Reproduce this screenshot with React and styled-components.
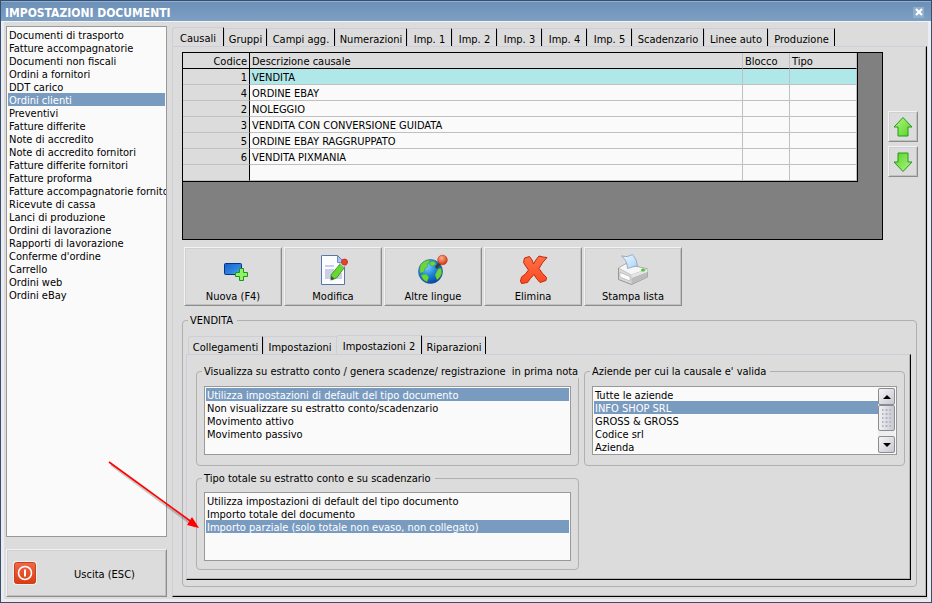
import React, { useRef, useState } from 'react';
import styled, { createGlobalStyle } from 'styled-components';

const documents = [
  'Documenti di trasporto',
  'Fatture accompagnatorie',
  'Documenti non fiscali',
  'Ordini a fornitori',
  'DDT carico',
  'Ordini clienti',
  'Preventivi',
  'Fatture differite',
  'Note di accredito',
  'Note di accredito fornitori',
  'Fatture differite fornitori',
  'Fatture proforma',
  'Fatture accompagnatorie fornitori',
  'Ricevute di cassa',
  'Lanci di produzione',
  'Ordini di lavorazione',
  'Rapporti di lavorazione',
  "Conferme d'ordine",
  'Carrello',
  'Ordini web',
  'Ordini eBay',
];

const mainTabs = [
  { label: 'Causali', width: 52 },
  { label: 'Gruppi', width: 43 },
  { label: 'Campi agg.', width: 68 },
  { label: 'Numerazioni', width: 72 },
  { label: 'Imp. 1', width: 45 },
  { label: 'Imp. 2', width: 45 },
  { label: 'Imp. 3', width: 45 },
  { label: 'Imp. 4', width: 45 },
  { label: 'Imp. 5', width: 45 },
  { label: 'Scadenzario', width: 72 },
  { label: 'Linee auto', width: 64 },
  { label: 'Produzione', width: 67 },
];

const detailTabs = [
  { label: 'Collegamenti', width: 75 },
  { label: 'Impostazioni', width: 73 },
  { label: 'Impostazioni 2', width: 86 },
  { label: 'Riparazioni', width: 64 },
];

const causali = [
  { code: 1, name: 'VENDITA' },
  { code: 4, name: 'ORDINE EBAY' },
  { code: 2, name: 'NOLEGGIO' },
  { code: 3, name: 'VENDITA CON CONVERSIONE GUIDATA' },
  { code: 5, name: 'ORDINE EBAY RAGGRUPPATO' },
  { code: 6, name: 'VENDITA PIXMANIA' },
  { code: '', name: '' },
];

const statementOptions = [
  'Utilizza impostazioni di default del tipo documento',
  'Non visualizzare su estratto conto/scadenzario',
  'Movimento attivo',
  'Movimento passivo',
];

const totalOptions = [
  'Utilizza impostazioni di default del tipo documento',
  'Importo totale del documento',
  'Importo parziale (solo totale non evaso, non collegato)',
];

const companies = [
  'Tutte le aziende',
  'INFO SHOP SRL',
  'GROSS & GROSS',
  'Codice srl',
  'Azienda',
];

const NewIcon = () => (
  <svg width="32" height="32" viewBox="0 0 32 32">
    <defs>
      <linearGradient id="screen" x1="0" y1="0" x2="1" y2="1">
        <stop offset="0" stopColor="#1760c8" />
        <stop offset=".6" stopColor="#2f86e2" />
        <stop offset="1" stopColor="#63b2f4" />
      </linearGradient>
    </defs>
    <rect x="7.5" y="8.5" width="17" height="11" rx="1" fill="url(#screen)" stroke="#0a2f86" />
    <path d="M22.500 13.500h4v4h4v4h-4v4h-4v-4h-4v-4h4z" fill="#94f06a" stroke="#179a12" />
  </svg>
);

const EditIcon = () => (
  <svg width="32" height="32" viewBox="0 0 32 32">
    <path d="M5.500 .5h15l7 7v22h-23v-29z" fill="#fbfcff" stroke="#5876a8" />
    <path d="M20.500 .5l0 7h7z" fill="#a9c8f0" stroke="#5876a8" strokeWidth=".8" />
    <path d="M8 10h9v2H8zM8 14h9v10H8zM18 18h7v6h-7z" fill="#c9cfe6" />
    <path d="M14 20l9-11 4.500 3.500-8 10.500-5 2z" fill="#67d82f" stroke="#2c8d12" strokeWidth=".8" />
    <path d="M13.500 25.500l.5-4.500 3.500 2.500z" fill="#4b4b3c" />
    <path d="M22.500 9l2-2.500 4.500 3.500-2 2.500z" fill="#d5dbe4" stroke="#8a94a5" strokeWidth=".6" />
    <circle cx="27.500" cy="7" r="3" fill="#ea4426" stroke="#b52912" strokeWidth=".8" />
  </svg>
);

const GlobeIcon = () => (
  <svg width="32" height="32" viewBox="0 0 32 32">
    <defs>
      <radialGradient id="sea" cx=".35" cy=".3" r=".75">
        <stop offset="0" stopColor="#7fd3ff" />
        <stop offset=".5" stopColor="#1f86dc" />
        <stop offset="1" stopColor="#0a3f9c" />
      </radialGradient>
      <radialGradient id="pin" cx=".4" cy=".3" r=".7">
        <stop offset="0" stopColor="#ffb08c" />
        <stop offset="1" stopColor="#cf3510" />
      </radialGradient>
    </defs>
    <circle cx="13.500" cy="16.500" r="12" fill="url(#sea)" stroke="#1355a6" strokeWidth=".6" />
    <path
      d="M4 9q4-4 9-4l-1 3-2 1 1 3-3 1-1 4-4 1q-1-5 1-9zM13 7l4-1 2 3-3 2-3-1zM4 20l5-1 3 3-2 5q-5-2-6-7zM21 14l3-1q2 5-1 9l-3 3-2-5z"
      fill="#6fd43c"
      stroke="#2f9a26"
      strokeWidth=".4"
    />
    <path d="M19 13l4-5" stroke="#3d3d3d" strokeWidth="3" />
    <circle cx="25.500" cy="5" r="4.800" fill="url(#pin)" stroke="#b53312" strokeWidth=".6" />
  </svg>
);

const DeleteIcon = () => (
  <svg width="32" height="32" viewBox="0 0 32 32">
    <defs>
      <linearGradient id="cross" x1="0" y1="0" x2="0" y2="1">
        <stop offset="0" stopColor="#ff7048" />
        <stop offset="1" stopColor="#fa4a1e" />
      </linearGradient>
    </defs>
    <path
      d="M7.500 3l5-1.500q3 3 4 7.500 2-4 5.500-8l4 1 4 .5q-5 5-8 11 3 5 7.500 9l-.5 3-6 2q-4-4-6-8-4 4-6.500 8l-6 1-1-2.500 1-4q4-2 7-7-3-4-5-7.500z"
      fill="url(#cross)"
      stroke="#c5260c"
      strokeLinejoin="round"
    />
  </svg>
);

const PrinterIcon = () => (
  <svg width="32" height="32" viewBox="0 0 32 32">
    <defs>
      <linearGradient id="paper" x1="0" y1="0" x2="1" y2="1">
        <stop offset="0" stopColor="#f4faff" />
        <stop offset="1" stopColor="#a9d2f8" />
      </linearGradient>
    </defs>
    <path d="M1.500 13l7-4 22 5v8l-16 7.500-13-5z" fill="#d8d8d8" stroke="#858585" strokeWidth=".8" />
    <path d="M1.500 13l7-4 22 5-16 6z" fill="#f6f6f6" stroke="#a5a5a5" strokeWidth=".5" />
    <path d="M14.500 20l16-6v8l-16 7z" fill="#bcbcbc" />
    <path d="M14.500 20l16-6v3l-16 6z" fill="#e6e6e6" />
    <path d="M3 17.500l10 4v4.500L3 22z" fill="#fff" stroke="#9c9c9c" strokeWidth=".5" />
    <path d="M4.500 1q6 2 11-1.500 4 4 5 11l-10 3q0-8-6-12.500z" fill="url(#paper)" stroke="#7fa0c4" strokeWidth=".8" />
    <ellipse cx="26" cy="15" rx="2" ry="1.500" fill="#3fcb2d" />
  </svg>
);

const ArrowIcon = ({ down }) => (
  <svg width="22" height="22" viewBox="0 0 22 22">
    <defs>
      <linearGradient id="green" x1="0" y1="0" x2="1" y2="1">
        <stop offset="0" stopColor="#b4f58a" />
        <stop offset="1" stopColor="#55d41f" />
      </linearGradient>
    </defs>
    <path
      d="M11 1.500l9 9.500h-4v9H6v-9H2z"
      transform={down ? 'rotate(180 11 11)' : undefined}
      fill="url(#green)"
      stroke="#229a18"
      strokeLinejoin="round"
    />
  </svg>
);

const PowerIcon = () => (
  <svg width="24" height="24" viewBox="0 0 24 24">
    <defs>
      <linearGradient id="power" x1="0" y1="0" x2="0" y2="1">
        <stop offset="0" stopColor="#ee6a4c" />
        <stop offset="1" stopColor="#dd3a0c" />
      </linearGradient>
    </defs>
    <rect x=".5" y=".5" width="23" height="23" rx="2" fill="#fff" />
    <rect x="1.500" y="1.500" width="21" height="21" rx="2" fill="url(#power)" stroke="#c8401f" />
    <circle cx="12" cy="12" r="6.500" fill="none" stroke="#fff" strokeWidth="1.600" />
    <path d="M12 8.500v7" stroke="#fff" strokeWidth="2" />
  </svg>
);

const tools = [
  { label: 'Nuova (F4)', Icon: NewIcon },
  { label: 'Modifica', Icon: EditIcon },
  { label: 'Altre lingue', Icon: GlobeIcon },
  { label: 'Elimina', Icon: DeleteIcon },
  { label: 'Stampa lista', Icon: PrinterIcon },
];

const Tabs = ({ tabs, active, onSelect, inset }) => (
  <TabStrip role="tablist" $inset={inset}>
    {tabs.map((tab, index) => (
      <Tab
        key={tab.label}
        role="tab"
        aria-selected={index === active}
        $active={index === active}
        $beforeActive={index === active - 1}
        $width={tab.width}
        onClick={() => onSelect(index)}
      >
        {tab.label}
      </Tab>
    ))}
  </TabStrip>
);

const Options = ({ items }) =>
  items.map((item) => (
    <option key={item} value={item}>
      {item}
    </option>
  ));

const CompanyList = () => {
  const list = useRef(null);
  const scroll = (amount) => {
    list.current.scrollTop += amount;
  };

  return (
    <ScrollFrame>
      <PlainListBox
        ref={list}
        size={5}
        aria-labelledby="companies"
        defaultValue="INFO SHOP SRL"
      >
        <Options items={companies} />
      </PlainListBox>
      <ScrollBar>
        <ScrollButton aria-label="Su" onClick={() => scroll(-13)}>
          <svg width="8" height="4" viewBox="0 0 8 4">
            <path d="M4 0l4 4H0z" />
          </svg>
        </ScrollButton>
        <ScrollThumb />
        <ScrollButton aria-label="Giù" onClick={() => scroll(13)}>
          <svg width="8" height="4" viewBox="0 0 8 4">
            <path d="M0 0h8L4 4z" />
          </svg>
        </ScrollButton>
      </ScrollBar>
    </ScrollFrame>
  );
};

const App = () => {
  const [mainTab, setMainTab] = useState(0);
  const [detailTab, setDetailTab] = useState(2);
  const [selected, setSelected] = useState(0);

  return (
    <>
      <GlobalStyle />
      <Window>
        <TitleBar>
          <Title>IMPOSTAZIONI DOCUMENTI</Title>
          <CloseButton aria-label="Chiudi">
            <svg width="8" height="8" viewBox="0 0 8 8">
              <path d="M1 1l6 6M7 1L1 7" stroke="#fff" strokeWidth="2.200" />
            </svg>
          </CloseButton>
        </TitleBar>
        <Body>
          <Sidebar>
            <DocumentList size={21} aria-label="Documenti" defaultValue="Ordini clienti">
              <Options items={documents} />
            </DocumentList>
            <ExitButton>
              <PowerIcon />
              <ExitLabel>Uscita (ESC)</ExitLabel>
            </ExitButton>
          </Sidebar>
          <Main>
            <Tabs tabs={mainTabs} active={mainTab} onSelect={setMainTab} />
            <MainPage>
              <GridRow>
                <GridArea>
                  <Table>
                    <thead>
                      <tr>
                        <HeadCell $width={67} $right>
                          Codice
                        </HeadCell>
                        <HeadCell>Descrizione causale</HeadCell>
                        <HeadCell $width={47}>Blocco</HeadCell>
                        <HeadCell $width={67}>Tipo</HeadCell>
                      </tr>
                    </thead>
                    <tbody>
                      {causali.map((row, index) => (
                        <Row
                          key={index}
                          $selected={index === selected}
                          onClick={() => setSelected(index)}
                        >
                          <CodeCell>{row.code}</CodeCell>
                          <Cell>{row.name}</Cell>
                          <Cell />
                          <Cell />
                        </Row>
                      ))}
                    </tbody>
                  </Table>
                </GridArea>
                <MoveButtons>
                  <MoveButton aria-label="Sposta su">
                    <ArrowIcon />
                  </MoveButton>
                  <MoveButton aria-label="Sposta giù">
                    <ArrowIcon down />
                  </MoveButton>
                </MoveButtons>
              </GridRow>
              <Toolbar>
                {tools.map(({ label, Icon }) => (
                  <ToolButton key={label}>
                    <Icon />
                    <span>{label}</span>
                  </ToolButton>
                ))}
              </Toolbar>
              <DetailGroup>
                <Legend>VENDITA</Legend>
                <DetailBody>
                  <Tabs tabs={detailTabs} active={detailTab} onSelect={setDetailTab} inset />
                  <DetailPage>
                    <Group>
                      <Legend id="statement">
                        Visualizza su estratto conto / genera scadenze/ registrazione&nbsp; in prima
                        nota
                      </Legend>
                      <GroupBody>
                        <ListBox
                          size={5}
                          aria-labelledby="statement"
                          defaultValue={statementOptions[0]}
                        >
                          <Options items={statementOptions} />
                        </ListBox>
                      </GroupBody>
                    </Group>
                    <Group>
                      <Legend id="companies">Aziende per cui la causale e' valida</Legend>
                      <GroupBody>
                        <CompanyList />
                      </GroupBody>
                    </Group>
                    <Group>
                      <Legend id="total">Tipo totale su estratto conto e su scadenzario</Legend>
                      <GroupBody $compact>
                        <ListBox size={5} aria-labelledby="total" defaultValue={totalOptions[2]}>
                          <Options items={totalOptions} />
                        </ListBox>
                      </GroupBody>
                    </Group>
                  </DetailPage>
                </DetailBody>
              </DetailGroup>
            </MainPage>
          </Main>
        </Body>
        <Pointer width="96" height="72" viewBox="0 0 96 72">
          <path d="M3 4l84 62" stroke="#000" strokeOpacity=".2" strokeWidth="2" />
          <path d="M1 1l84 61" stroke="#f00" strokeWidth="1.600" />
          <path d="M91 67l-12-3 5-8z" fill="#f00" />
        </Pointer>
      </Window>
    </>
  );
};

const GlobalStyle = createGlobalStyle`
  * {
    box-sizing: border-box;
  }

  body {
    margin: 0;
    background: #dcdcdc;
  }

  body, button, select {
    font-family: 'DejaVu Sans Condensed', 'DejaVu Sans', Tahoma, sans-serif;
    font-size: 11px;
    line-height: 13px;
    color: #000;
  }
`;

const Window = styled.div`
  position: relative;
  display: flex;
  flex-direction: column;
  min-height: 100vh;
  border: 1px solid #34506e;
  background: #dcdcdc;
`;

const TitleBar = styled.header`
  display: flex;
  align-items: center;
  justify-content: space-between;
  height: 21px;
  padding: 3px 7px 0 4px;
  border-top: 1px solid #8fb0d2;
  border-bottom: 1px solid #f4f4f4;
  background: linear-gradient(#6c90b7, #7d9fc4);
`;

const Title = styled.h1`
  margin: 0;
  font-size: 12px;
  line-height: 15px;
  font-weight: 700;
  color: #fff;
`;

const CloseButton = styled.button`
  display: flex;
  align-items: center;
  justify-content: center;
  width: 11px;
  height: 11px;
  margin-bottom: 2px;
  padding: 0;
  border: 0;
  background: #8fadcd;
`;

const Body = styled.div`
  flex: 1;
  display: flex;
  gap: 5px;
  padding: 4px 4px 5px 5px;
  box-shadow: inset 3px 0 #ececf0, inset -3px 0 #ececf0, inset 0 -3px #ececf0;
`;

const Sidebar = styled.aside`
  display: flex;
  flex-direction: column;
  gap: 12px;
  width: 161px;
`;

const PlainListBox = styled.select`
  flex: 1;
  min-width: 0;
  margin: 0;
  padding: 0;
  border: 0;
  border-radius: 0;
  outline: none;
  overflow: hidden;
  background: #fafafa;

  option {
    min-height: 13px;
    height: 13px;
    padding: 1px 1px 0;
    line-height: 13px;
  }

  option:checked {
    color: #fff;
    background: #7a9bc0 linear-gradient(#7a9bc0, #7a9bc0);
  }
`;

const ListBox = styled(PlainListBox)`
  height: 69px;
  padding: 1px;
  border: 1px solid #999;
`;

const DocumentList = styled(ListBox)`
  height: auto;
`;

const raised = `
  border: 1px solid;
  border-color: #f2f2f2 #8c8c8c #8c8c8c #f2f2f2;
  box-shadow: inset 1px 1px #cfcfd6, inset -1px -1px #c0c0c0;
  background: #dcdcdc;
`;

const ExitButton = styled.button`
  ${raised}
  display: flex;
  align-items: center;
  height: 48px;
  padding: 0 6px;
`;

const ExitLabel = styled.span`
  flex: 1;
  padding: 2px 0 0 12px;
  text-align: center;
`;

const Main = styled.main`
  flex: 1;
  display: flex;
  flex-direction: column;
  min-width: 0;
`;

const TabStrip = styled.div`
  display: flex;
  align-items: flex-end;
  height: 20px;
  padding-left: ${(props) => (props.$inset ? 2 : 0)}px;
`;

const Tab = styled.button`
  width: ${(props) => props.$width}px;
  height: ${(props) => (props.$active ? 20 : 18)}px;
  margin-bottom: ${(props) => (props.$active ? -1 : 0)}px;
  padding: ${(props) => (props.$active ? '1px 0 0' : '3px 0 0')};
  border: 1px solid;
  border-color: #cdced8 #000 transparent #cdced8;
  border-bottom: 0;
  border-right-width: ${(props) => (props.$beforeActive ? 0 : 1)}px;
  border-radius: 3px 1px 0 0;
  background: #dcdcdc;
  white-space: nowrap;
`;

const MainPage = styled.section`
  flex: 1;
  display: flex;
  flex-direction: column;
  padding: 5px 8px 9px 9px;
  border: 1px solid;
  border-color: #cdced8 #000 #000 #cdced8;
  box-shadow: inset -1px -1px #b4b4b4;
`;

const GridRow = styled.div`
  display: flex;
  align-items: center;
  gap: 5px;
`;

const GridArea = styled.div`
  flex: 1;
  height: 188px;
  padding-right: 24px;
  border: 1px solid #000;
  background: #808080;
`;

const Table = styled.table`
  width: 100%;
  table-layout: fixed;
  border-spacing: 0;
  border-right: 1px solid #000;
  border-bottom: 1px solid #000;
`;

const HeadCell = styled.th`
  width: ${(props) => (props.$width ? `${props.$width}px` : 'auto')};
  height: 16px;
  padding: 2px 2px 0;
  border-right: 1px solid ${(props) => (props.$right ? '#000' : '#c0c0c0')};
  border-bottom: 1px solid #000;
  background: #dcdcdc;
  font-weight: 400;
  text-align: ${(props) => (props.$right ? 'right' : 'left')};
`;

const Cell = styled.td`
  height: 16px;
  padding: 2px 2px 0;
  border-right: 1px solid #c0c0c0;
  border-bottom: 1px solid #c0c0c0;
`;

const CodeCell = styled(Cell)`
  border-right-color: #000;
  background: #dcdcdc;
  text-align: right;
`;

const Row = styled.tr`
  background: ${(props) => (props.$selected ? '#b0e8ea' : '#fafafa')};
`;

const MoveButtons = styled.div`
  display: flex;
  flex-direction: column;
  gap: 4px;
  margin-bottom: 4px;
`;

const MoveButton = styled.button`
  ${raised}
  display: flex;
  align-items: center;
  justify-content: center;
  width: 30px;
  height: 31px;
  padding: 0;
`;

const Toolbar = styled.div`
  display: flex;
  gap: 2px;
  padding: 7px 2px 8px;
`;

const ToolButton = styled.button`
  ${raised}
  display: flex;
  flex-direction: column;
  align-items: center;
  gap: 3px;
  width: 98px;
  height: 59px;
  padding: 7px 0 0;

  svg {
    overflow: visible;
  }
`;

const Group = styled.fieldset`
  min-width: 0;
  margin: 0;
  padding: 0;
  border: 1px solid #b0b0b0;
  border-radius: 4px;
`;

const DetailGroup = styled(Group)`
  flex: 1;
  display: flex;
  flex-direction: column;
  margin-right: 1px;
`;

const Legend = styled.legend`
  margin-left: 5px;
  padding: 0 4px 0 2px;
  white-space: nowrap;
`;

const DetailBody = styled.div`
  flex: 1;
  display: flex;
  flex-direction: column;
  padding: 7px 5px 6px 3px;
`;

const DetailPage = styled.div`
  flex: 1;
  display: grid;
  grid-template-columns: 383fr 321fr;
  align-content: start;
  gap: 6px 5px;
  padding: 10px 5px 9px 9px;
  border: 1px solid;
  border-color: #cdced8 #000 #000 #cdced8;
  box-shadow: inset -1px -1px #b4b4b4;
`;

const GroupBody = styled.div`
  display: flex;
  padding: ${(props) => (props.$compact ? '7px 7px 8px' : '8px 7px 10px')};
`;

const ScrollFrame = styled.div`
  flex: 1;
  display: flex;
  height: 69px;
  padding: 1px;
  border: 1px solid #999;
  background: #fafafa;
`;

const ScrollBar = styled.div`
  display: flex;
  flex-direction: column;
  width: 17px;
  background: #eee;
`;

const ScrollButton = styled.button`
  display: flex;
  align-items: center;
  justify-content: center;
  height: 17px;
  padding: 0;
  border: 1px solid #8c8c90;
  border-radius: 2px;
  background: linear-gradient(135deg, #f4f4f8, #c8c8d2);
`;

const ScrollThumb = styled.div`
  height: 26px;
  margin-bottom: auto;
  padding: 2px 3px;
  border: 1px solid #8c8c90;
  border-radius: 2px;
  background:
    radial-gradient(#b4b4bc 1px, transparent 1px) center / 4px 4px content-box,
    linear-gradient(90deg, #f0f0f4, #c8c8d2);
`;

const Pointer = styled.svg`
  position: absolute;
  left: 107px;
  top: 460px;
  pointer-events: none;
`;

export default App;
